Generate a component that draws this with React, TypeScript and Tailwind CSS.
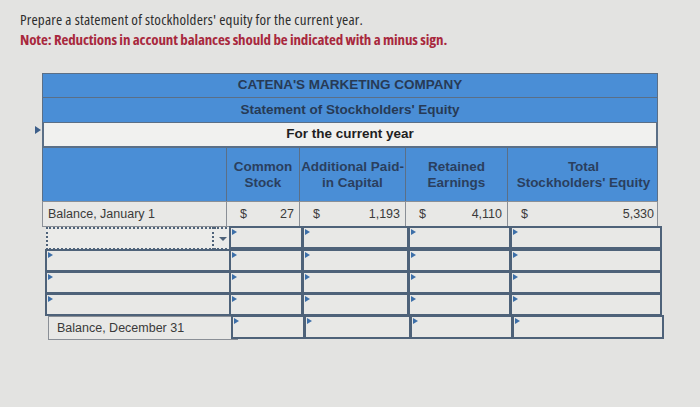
import React from "react";

const cols = "grid grid-cols-[184px_73px_106px_102px_151px]";

function Flag() {
  return (
    <span className="absolute left-[1px] top-[1px] h-0 w-0 border-y-[3px] border-l-[5px] border-y-transparent border-l-[#3d6fa8]" />
  );
}

function InputCell({ flag = true, className = "" }: { flag?: boolean; className?: string }) {
  return (
    <div className={`relative h-[23px] border-2 border-[#4e6279] bg-[#e8e8e6] -ml-[1px] -mt-[1px] ${className}`}>
      {flag && <Flag />}
    </div>
  );
}

function MoneyCell({ value }: { value: string }) {
  return (
    <div className="flex items-center justify-between h-[24px] border-r border-[#8a8f96] px-[5px] text-[12.5px] text-[#3a3a3a]">
      <span className="pl-[8px]">$</span>
      <span>{value}</span>
    </div>
  );
}

export default function App() {
  const headers = [
    ["Common", "Stock"],
    ["Additional Paid-", "in Capital"],
    ["Retained", "Earnings"],
    ["Total", "Stockholders' Equity"],
  ];

  return (
    <div className="w-[700px] h-[407px] bg-[#e3e3e1] overflow-hidden font-['Liberation_Sans',Arial,sans-serif]">
      <div className="pl-[20px] pt-[9px] font-['Open_Sans',sans-serif] text-[15px] leading-[20px]">
        <p className="font-stretch-[75%] tracking-[0.2px] text-[#2e2e2e]">
          Prepare a statement of stockholders' equity for the current year.
        </p>
        <p className="font-stretch-[75%] tracking-[-0.15px] font-bold text-[#a8283d]">
          Note: Reductions in account balances should be indicated with a minus sign.
        </p>
      </div>

      <div className="ml-[42px] mt-[24px] w-[616px]">
        {/* Title rows */}
        <div className="h-[25px] bg-[#4a8ed6] border border-[#5b6f86] flex items-center justify-center text-[13.5px] font-bold text-[#273a55]">
          CATENA'S MARKETING COMPANY
        </div>
        <div className="h-[25px] bg-[#4a8ed6] border-x border-b border-[#5b6f86] flex items-center justify-center text-[13.5px] font-bold text-[#273a55]">
          Statement of Stockholders' Equity
        </div>
        <div className="relative h-[25px] bg-[#f1f1ef] border-x-2 border-b-2 border-[#5b6f86] flex items-center justify-center text-[13.5px] font-bold text-[#1f1f1f]">
          <span className="absolute -left-[9px] top-[3px] h-0 w-0 border-y-[4px] border-l-[6px] border-y-transparent border-l-[#3d5f8a]" />
          For the current year
        </div>

        {/* Column headers */}
        <div className={`${cols} h-[53px] bg-[#4a8ed6] border-x border-[#5b6f86]`}>
          <div className="border-r border-[#5b6f86]" />
          {headers.map((h, i) => (
            <div
              key={i}
              className={`flex flex-col items-center justify-center text-[13.5px] leading-[16px] font-bold text-[#2a3f5e] ${i < 3 ? "border-r border-[#5b6f86]" : ""}`}
            >
              <span>{h[0]}</span>
              <span>{h[1]}</span>
            </div>
          ))}
        </div>

        {/* Balance, January 1 */}
        <div className={`${cols} border border-[#8a8f96] bg-[#e8e8e6]`}>
          <div className="flex items-center h-[24px] pl-[5px] border-r border-[#8a8f96] text-[12.5px] text-[#3a3a3a]">
            Balance, January 1
          </div>
          <MoneyCell value="27" />
          <MoneyCell value="1,193" />
          <MoneyCell value="4,110" />
          <div className="flex items-center justify-between h-[24px] px-[5px] text-[12.5px] text-[#3a3a3a]">
            <span className="pl-[8px]">$</span>
            <span>5,330</span>
          </div>
        </div>

        {/* Entry rows */}
        {[0, 1, 2, 3].map((r) => (
          <div key={r} className={`${cols} pl-[4px]`}>
            {r === 0 ? (
              <div className="flex h-[23px] -mr-[4px]">
                <div className="flex-1 border-2 border-dotted border-[#4e6279] bg-[#ebebe9]" />
                <div className="w-[20px] flex items-center justify-center border-y-2 border-r-2 border-dotted border-[#4e6279] bg-[#ebebe9]">
                  <span className="h-0 w-0 border-x-[4px] border-t-[4px] border-x-transparent border-t-[#4e6279]" />
                </div>
              </div>
            ) : (
              <InputCell className="-mr-[4px]" />
            )}
            <InputCell />
            <InputCell />
            <InputCell />
            <InputCell />
          </div>
        ))}

        {/* Balance, December 31 */}
        <div className={`${cols} pl-[6px]`}>
          <div className="flex items-center h-[24px] pl-[8px] -mr-[6px] border border-[#8a8f96] bg-[#e8e8e6] text-[12.5px] text-[#3a3a3a]">
            Balance, December 31
          </div>
          <InputCell className="h-[24px]" />
          <InputCell className="h-[24px]" />
          <InputCell className="h-[24px]" />
          <InputCell className="h-[24px]" />
        </div>
      </div>
    </div>
  );
}
